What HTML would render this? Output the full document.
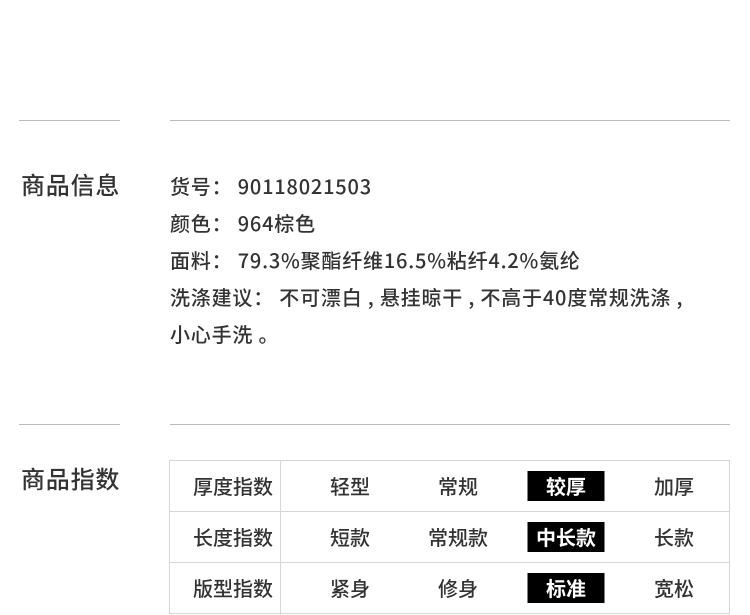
<!DOCTYPE html>
<html><head><meta charset="utf-8"><style>
*{margin:0;padding:0;box-sizing:border-box}
body{width:750px;height:614px;background:#fff;position:relative;overflow:hidden;font-family:"Noto Sans CJK SC","Liberation Sans",sans-serif;color:#333;font-weight:500}
.l{position:absolute;height:1px;background:#bbb}
.h{position:absolute;left:21px;font-size:24px;letter-spacing:0.8px;line-height:30px;color:#333}
.info{position:absolute;left:170px;top:167px;font-size:20px;letter-spacing:0.8px;line-height:37px;color:#333;white-space:nowrap}
.tbl{position:absolute;left:169px;top:460px;width:561px;height:154px;border:1px solid #d6d6d6}
.hl{position:absolute;left:0;width:559px;height:1px;background:#d6d6d6}
.vl{position:absolute;left:110px;top:0;width:1px;height:154px;background:#d6d6d6}
.c{position:absolute;font-size:20px;line-height:30px;height:30px;transform:translateX(-50%);white-space:nowrap}
.sel{background:#000;color:#fff;width:77px;text-align:center;font-weight:bold}
</style></head><body>
<div class="l" style="left:19px;top:120px;width:101px"></div>
<div class="l" style="left:170px;top:120px;width:560px"></div>
<div class="h" style="top:169px">商品信息</div>
<div class="info">
<div>货号： 90118021503</div>
<div>颜色： 964棕色</div>
<div>面料： 79.3%聚酯纤维16.5%粘纤4.2%氨纶</div>
<div>洗涤建议： 不可漂白 , 悬挂晾干 , 不高于40度常规洗涤 ,</div>
<div>小心手洗 。</div>
</div>
<div class="l" style="left:19px;top:424px;width:101px"></div>
<div class="l" style="left:170px;top:424px;width:560px"></div>
<div class="h" style="top:463px">商品指数</div>
<div class="tbl">
<div class="hl" style="top:50px"></div>
<div class="hl" style="top:101px"></div>
<div class="vl"></div>
</div>
<div class="c" style="left:233px;top:471px">厚度指数</div>
<div class="c" style="left:350px;top:471px">轻型</div>
<div class="c" style="left:458px;top:471px">常规</div>
<div class="c sel" style="left:566px;top:471px">较厚</div>
<div class="c" style="left:674px;top:471px">加厚</div>
<div class="c" style="left:233px;top:522px">长度指数</div>
<div class="c" style="left:350px;top:522px">短款</div>
<div class="c" style="left:458px;top:522px">常规款</div>
<div class="c sel" style="left:566px;top:522px">中长款</div>
<div class="c" style="left:674px;top:522px">长款</div>
<div class="c" style="left:233px;top:573px">版型指数</div>
<div class="c" style="left:350px;top:573px">紧身</div>
<div class="c" style="left:458px;top:573px">修身</div>
<div class="c sel" style="left:566px;top:573px">标准</div>
<div class="c" style="left:674px;top:573px">宽松</div>
</body></html>
